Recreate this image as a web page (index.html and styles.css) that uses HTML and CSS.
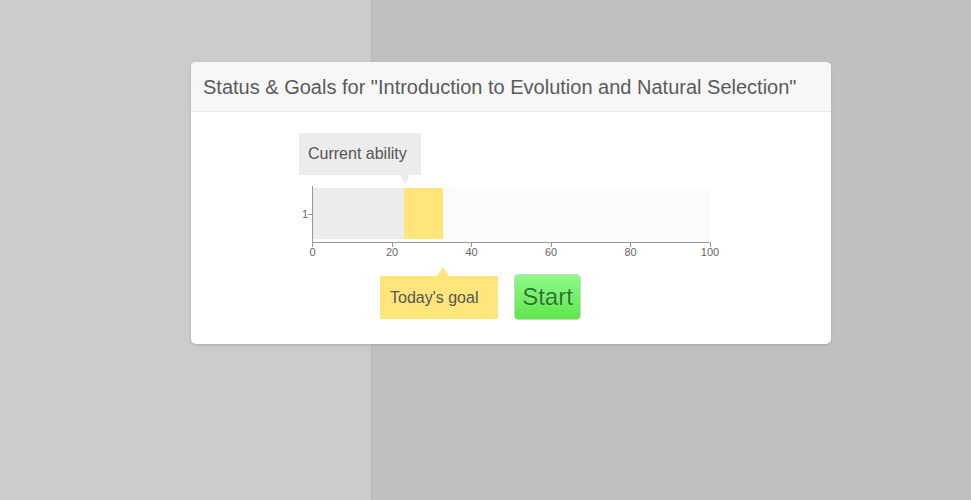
FILE: index.html
```html
<!DOCTYPE html>
<html>
<head>
<meta charset="utf-8">
<link rel="stylesheet" href="styles.css">
</head>
<body>
<div class="page">
  <div class="sidebar"></div>
  <div class="main"></div>
</div>
<div class="dialog">
  <div class="dialog-header">Status &amp; Goals for "Introduction to Evolution and Natural Selection"</div>
  <div class="dialog-body">
    <div class="tip tip-current">Current ability</div>
    <svg class="chart" width="440" height="80" viewBox="0 0 440 80">
      <rect x="22" y="5" width="91" height="51" fill="#ececec"/>
      <rect x="113" y="5" width="39" height="51" fill="#ffe57a"/>
      <rect x="152" y="5" width="267" height="51" fill="#fbfbfb"/>
      <line x1="21.5" y1="3" x2="21.5" y2="60" stroke="#999" stroke-width="1"/>
      <line x1="17" y1="31.5" x2="21" y2="31.5" stroke="#999" stroke-width="1"/>
      <text x="17" y="35" class="tick" text-anchor="end">1</text>
      <line x1="21" y1="59.5" x2="419.5" y2="59.5" stroke="#999" stroke-width="1"/>
      <g stroke="#999" stroke-width="1">
        <line x1="21.5" y1="60" x2="21.5" y2="64"/>
        <line x1="101.5" y1="60" x2="101.5" y2="64"/>
        <line x1="180.5" y1="60" x2="180.5" y2="64"/>
        <line x1="260.5" y1="60" x2="260.5" y2="64"/>
        <line x1="339.5" y1="60" x2="339.5" y2="64"/>
        <line x1="419.5" y1="60" x2="419.5" y2="64"/>
      </g>
      <text x="21.5" y="73" class="tick" text-anchor="middle">0</text>
      <text x="101" y="73" class="tick" text-anchor="middle">20</text>
      <text x="180.5" y="73" class="tick" text-anchor="middle">40</text>
      <text x="260" y="73" class="tick" text-anchor="middle">60</text>
      <text x="339.5" y="73" class="tick" text-anchor="middle">80</text>
      <text x="419" y="73" class="tick" text-anchor="middle">100</text>
    </svg>
    <div class="actions">
      <div class="tip tip-goal">Today's goal</div>
      <button class="start">Start</button>
    </div>
  </div>
</div>
</body>
</html>
```
FILE: styles.css
```css
html, body {
  margin: 0;
  padding: 0;
  height: 100%;
}
body {
  font-family: "Liberation Sans", Arial, sans-serif;
  overflow: hidden;
}
.page {
  display: flex;
  height: 100vh;
}
.sidebar {
  width: 371px;
  background: #cbcbcb;
  border-right: 1px solid #bababa;
}
.main {
  flex: 1;
  background: #c0c0c0;
}
.dialog {
  position: absolute;
  left: 191px;
  top: 62px;
  width: 640px;
  height: 282px;
  background: #fff;
  border-radius: 5px;
  box-shadow: 0 1px 3px rgba(0,0,0,0.15);
  overflow: hidden;
}
.dialog-header {
  height: 49px;
  background: #f7f7f7;
  border-bottom: 1px solid #e8e8e8;
  padding-left: 12px;
  font-size: 20px;
  line-height: 50px;
  color: #5a5a5a;
}
.dialog-body {
  padding-top: 21px;
}
.tip {
  position: relative;
  font-size: 16px;
  color: #555;
  box-sizing: border-box;
}
.tip-current {
  margin-left: 108px;
  width: 122px;
  height: 42px;
  line-height: 42px;
  padding-left: 9px;
  background: #ececec;
}
.tip-current::after {
  content: "";
  position: absolute;
  left: 101px;
  top: 42px;
  border-left: 5px solid transparent;
  border-right: 5px solid transparent;
  border-top: 9px solid #ececec;
}
.chart {
  display: block;
  margin-left: 100px;
  margin-top: 8px;
}
.tick {
  font-family: "Liberation Sans", Arial, sans-serif;
  font-size: 11px;
  fill: #666;
}
.actions {
  display: flex;
  align-items: center;
  gap: 16px;
  margin-left: 189px;
  margin-top: 11px;
}
.tip-goal {
  width: 118px;
  height: 43px;
  line-height: 43px;
  padding-left: 10px;
  background: #ffe57a;
  margin-top: 1px;
}
.tip-goal::before {
  content: "";
  position: absolute;
  left: 57px;
  top: -9px;
  border-left: 6px solid transparent;
  border-right: 6px solid transparent;
  border-bottom: 9px solid #ffe57a;
}
.start {
  width: 67px;
  height: 46px;
  padding: 0;
  border: 1px solid #c8d8c8;
  border-radius: 4px;
  background: linear-gradient(#8ff98a, #5ee64b);
  font-family: "Liberation Sans", Arial, sans-serif;
  font-size: 24px;
  color: #23781f;
  text-shadow: 0 0 1px #d8ffd8;
  cursor: pointer;
}
```
